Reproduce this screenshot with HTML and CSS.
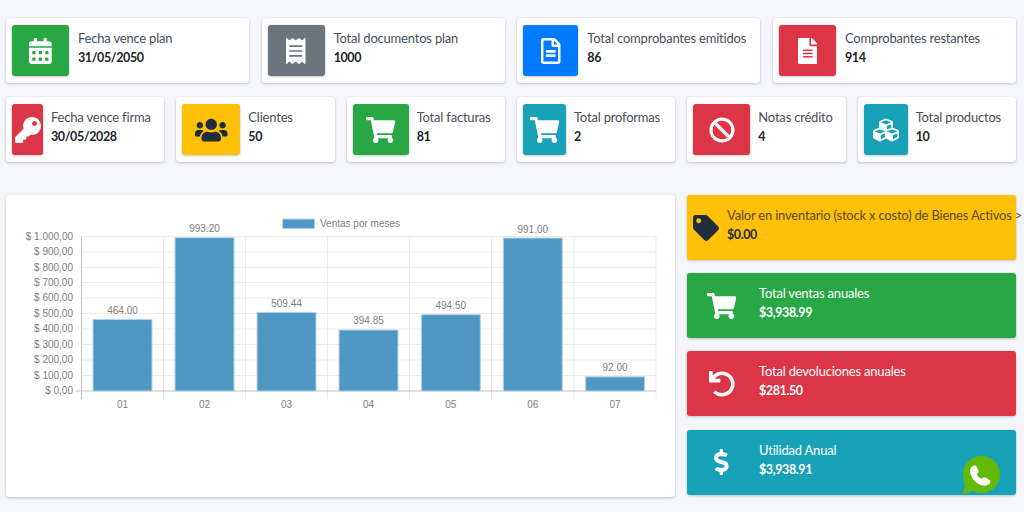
FILE: index.html
```html
<!DOCTYPE html>
<html lang="es">
<head>
  <meta charset="UTF-8">
  <title>Dashboard</title>
  <meta name="viewport" content="width=device-width, initial-scale=1.0">
  <link rel="stylesheet" href="styles.css">
</head>
<body>

<div class="row row-4">
  <div class="info-box">
    <div class="icon bg-green w57">
      <svg class="fa" viewBox="0 0 448 512"><path d="M0 464c0 26.5 21.5 48 48 48h352c26.5 0 48-21.5 48-48V192H0v272zm320-196c0-6.6 5.4-12 12-12h40c6.6 0 12 5.4 12 12v40c0 6.6-5.4 12-12 12h-40c-6.6 0-12-5.4-12-12v-40zm0 128c0-6.6 5.4-12 12-12h40c6.6 0 12 5.4 12 12v40c0 6.6-5.4 12-12 12h-40c-6.6 0-12-5.4-12-12v-40zM192 268c0-6.6 5.4-12 12-12h40c6.6 0 12 5.4 12 12v40c0 6.6-5.4 12-12 12h-40c-6.6 0-12-5.4-12-12v-40zm0 128c0-6.6 5.4-12 12-12h40c6.6 0 12 5.4 12 12v40c0 6.6-5.4 12-12 12h-40c-6.6 0-12-5.4-12-12v-40zM64 268c0-6.6 5.4-12 12-12h40c6.6 0 12 5.4 12 12v40c0 6.6-5.4 12-12 12H76c-6.6 0-12-5.4-12-12v-40zm0 128c0-6.6 5.4-12 12-12h40c6.6 0 12 5.4 12 12v40c0 6.6-5.4 12-12 12H76c-6.6 0-12-5.4-12-12v-40zM400 64h-48V16c0-8.8-7.2-16-16-16h-32c-8.8 0-16 7.2-16 16v48H160V16c0-8.8-7.2-16-16-16h-32c-8.8 0-16 7.2-16 16v48H48C21.5 64 0 85.5 0 112v48h448v-48c0-26.5-21.5-48-48-48z"/></svg>
    </div>
    <div class="text"><span class="label">Fecha vence plan</span><span class="value">31/05/2050</span></div>
  </div>
  <div class="info-box">
    <div class="icon bg-gray w57">
      <svg class="fa" viewBox="0 0 384 512"><path d="M358.4 3.2L320 48 265.6 3.2a15.9 15.9 0 0 0-19.2 0L192 48 137.6 3.2a15.9 15.9 0 0 0-19.2 0L64 48 25.6 3.2C15-4.7 0 2.8 0 16v480c0 13.2 15 20.7 25.6 12.8L64 464l54.4 44.8a15.9 15.9 0 0 0 19.2 0L192 464l54.4 44.8a15.9 15.9 0 0 0 19.2 0L320 464l38.4 44.8c10.5 7.9 25.6.4 25.6-12.8V16c0-13.2-15-20.7-25.6-12.8zM320 360c0 4.4-3.6 8-8 8H72c-4.4 0-8-3.6-8-8v-16c0-4.4 3.6-8 8-8h240c4.4 0 8 3.6 8 8v16zm0-96c0 4.4-3.6 8-8 8H72c-4.4 0-8-3.6-8-8v-16c0-4.4 3.6-8 8-8h240c4.4 0 8 3.6 8 8v16zm0-96c0 4.4-3.6 8-8 8H72c-4.4 0-8-3.6-8-8v-16c0-4.4 3.6-8 8-8h240c4.4 0 8 3.6 8 8v16z"/></svg>
    </div>
    <div class="text"><span class="label">Total documentos plan</span><span class="value">1000</span></div>
  </div>
  <div class="info-box">
    <div class="icon bg-blue w55">
      <svg class="fa" viewBox="0 0 384 512"><path d="M288 248v28c0 6.6-5.4 12-12 12H108c-6.6 0-12-5.4-12-12v-28c0-6.6 5.4-12 12-12h168c6.6 0 12 5.4 12 12zm-12 72H108c-6.6 0-12 5.4-12 12v28c0 6.6 5.4 12 12 12h168c6.6 0 12-5.4 12-12v-28c0-6.6-5.4-12-12-12zm108-188.1V464c0 26.5-21.5 48-48 48H48c-26.5 0-48-21.5-48-48V48C0 21.5 21.5 0 48 0h204.1C264.8 0 277 5.1 286 14.1L369.9 98c9 8.9 14.1 21.2 14.1 33.9zm-128-80V128h76.1L256 51.9zM336 464V176H232c-13.3 0-24-10.7-24-24V48H48v416h288z"/></svg>
    </div>
    <div class="text"><span class="label">Total comprobantes emitidos</span><span class="value">86</span></div>
  </div>
  <div class="info-box">
    <div class="icon bg-red w57">
      <svg class="fa" viewBox="0 0 384 512"><path d="M224 136V0H24C10.7 0 0 10.7 0 24v464c0 13.3 10.7 24 24 24h336c13.3 0 24-10.7 24-24V160H248c-13.2 0-24-10.8-24-24zm64 236c0 6.6-5.4 12-12 12H108c-6.6 0-12-5.4-12-12v-8c0-6.6 5.4-12 12-12h168c6.6 0 12 5.4 12 12v8zm0-64c0 6.6-5.4 12-12 12H108c-6.6 0-12-5.4-12-12v-8c0-6.6 5.4-12 12-12h168c6.6 0 12 5.4 12 12v8zm0-72v8c0 6.6-5.4 12-12 12H108c-6.6 0-12-5.4-12-12v-8c0-6.6 5.4-12 12-12h168c6.6 0 12 5.4 12 12zm96-114.1v6.1H256V0h6.1c6.4 0 12.5 2.5 17 7l97.9 98c4.5 4.5 7 10.6 7 16.9z"/></svg>
    </div>
    <div class="text"><span class="label">Comprobantes restantes</span><span class="value">914</span></div>
  </div>
</div>

<div class="row row-6">
  <div class="info-box">
    <div class="icon bg-red w31">
      <svg class="fa" viewBox="0 0 512 512"><path d="M512 176.001C512 273.203 433.202 352 336 352c-11.22 0-22.19-1.062-32.827-3.069l-24.012 27.014A23.999 23.999 0 0 1 261.223 384H224v40c0 13.255-10.745 24-24 24h-40v40c0 13.255-10.745 24-24 24H24c-13.255 0-24-10.745-24-24v-78.059c0-6.365 2.529-12.47 7.029-16.971l161.802-161.802C163.108 213.814 160 195.271 160 176 160 78.798 238.797.001 335.999 0 433.488-.001 512 78.511 512 176.001zM336 128c0 26.51 21.49 48 48 48s48-21.49 48-48-21.49-48-48-48-48 21.49-48 48z"/></svg>
    </div>
    <div class="text"><span class="label">Fecha vence firma</span><span class="value">30/05/2028</span></div>
  </div>
  <div class="info-box">
    <div class="icon bg-yellow w58">
      <svg class="fa" viewBox="0 0 640 512"><path d="M96 224c35.3 0 64-28.7 64-64s-28.7-64-64-64-64 28.7-64 64 28.7 64 64 64zm448 0c35.3 0 64-28.7 64-64s-28.7-64-64-64-64 28.7-64 64 28.7 64 64 64zm32 32h-64c-17.6 0-33.5 7.1-45.1 18.6 40.3 22.1 68.9 62 75.1 109.4h66c17.7 0 32-14.3 32-32v-32c0-35.3-28.7-64-64-64zm-256 0c61.9 0 112-50.1 112-112S381.9 32 320 32 208 82.1 208 144s50.1 112 112 112zm76.8 32h-8.3c-20.8 10-43.9 16-68.5 16s-47.6-6-68.5-16h-8.3C179.6 288 128 339.6 128 403.2V432c0 26.5 21.5 48 48 48h288c26.5 0 48-21.5 48-48v-28.8c0-63.6-51.6-115.2-115.2-115.2zm-223.7-13.4C161.5 263.1 145.6 256 128 256H64c-35.3 0-64 28.7-64 64v32c0 17.7 14.3 32 32 32h65.9c6.3-47.4 34.9-87.3 75.2-109.4z"/></svg>
    </div>
    <div class="text"><span class="label">Clientes</span><span class="value">50</span></div>
  </div>
  <div class="info-box">
    <div class="icon bg-green w56">
      <svg class="fa" viewBox="0 0 576 512"><path d="M528.12 301.319l47.273-208C578.806 78.301 567.391 64 551.99 64H159.208l-9.166-44.81C147.758 8.021 137.93 0 126.529 0H24C10.745 0 0 10.745 0 24v16c0 13.255 10.745 24 24 24h69.883l70.248 343.435C147.325 417.1 136 435.222 136 456c0 30.928 25.072 56 56 56s56-25.072 56-56c0-15.674-6.447-29.835-16.824-40h209.647C430.447 426.165 424 440.326 424 456c0 30.928 25.072 56 56 56s56-25.072 56-56c0-22.172-12.888-41.332-31.579-50.405l5.517-24.276c3.413-15.018-8.002-29.319-23.403-29.319H218.117l-6.545-32h293.145c11.206 0 20.92-7.754 23.403-18.681z"/></svg>
    </div>
    <div class="text"><span class="label">Total facturas</span><span class="value">81</span></div>
  </div>
  <div class="info-box">
    <div class="icon bg-teal w43">
      <svg class="fa" viewBox="0 0 576 512"><path d="M528.12 301.319l47.273-208C578.806 78.301 567.391 64 551.99 64H159.208l-9.166-44.81C147.758 8.021 137.93 0 126.529 0H24C10.745 0 0 10.745 0 24v16c0 13.255 10.745 24 24 24h69.883l70.248 343.435C147.325 417.1 136 435.222 136 456c0 30.928 25.072 56 56 56s56-25.072 56-56c0-15.674-6.447-29.835-16.824-40h209.647C430.447 426.165 424 440.326 424 456c0 30.928 25.072 56 56 56s56-25.072 56-56c0-22.172-12.888-41.332-31.579-50.405l5.517-24.276c3.413-15.018-8.002-29.319-23.403-29.319H218.117l-6.545-32h293.145c11.206 0 20.92-7.754 23.403-18.681z"/></svg>
    </div>
    <div class="text"><span class="label">Total proformas</span><span class="value">2</span></div>
  </div>
  <div class="info-box">
    <div class="icon bg-red w57">
      <svg class="fa" viewBox="0 0 512 512"><path d="M256 8C119.034 8 8 119.033 8 256s111.034 248 248 248 248-111.034 248-248S392.967 8 256 8zm130.108 117.892c65.448 65.448 70 165.481 20.677 235.637L150.47 105.216c70.204-49.356 170.226-44.735 235.638 20.676zM125.892 386.108c-65.448-65.448-70-165.481-20.677-235.637L361.53 406.784c-70.203 49.356-170.226 44.736-235.638-20.676z"/></svg>
    </div>
    <div class="text"><span class="label">Notas crédito</span><span class="value">4</span></div>
  </div>
  <div class="info-box">
    <div class="icon bg-teal w44">
      <svg class="fa" viewBox="0 0 512 512"><path d="M488.6 250.2L392 214V105.5c0-15-9.3-28.4-23.4-33.7l-100-37.5c-8.1-3.1-17.1-3.1-25.3 0l-100 37.5c-14.1 5.3-23.4 18.7-23.4 33.7V214l-96.6 36.2C9.3 255.5 0 268.9 0 283.9V394c0 13.6 7.7 26.1 19.9 32.2l100 50c10.1 5.1 22.1 5.1 32.2 0l103.9-52 103.9 52c10.1 5.1 22.1 5.1 32.2 0l100-50c12.2-6.1 19.9-18.6 19.9-32.2V283.9c0-15-9.3-28.4-23.4-33.7zM358 214.8l-85 31.9v-68.2l85-37v73.3zM154 104.1l102-38.2 102 38.2v.6l-102 41.4-102-41.4v-.6zm84 291.1l-85 42.5v-79.1l85-38.8v75.4zm0-112l-102 41.4-102-41.4v-.6l102-38.2 102 38.2v.6zm240 112l-85 42.5v-79.1l85-38.8v75.4zm0-112l-102 41.4-102-41.4v-.6l102-38.2 102 38.2v.6z"/></svg>
    </div>
    <div class="text"><span class="label">Total productos</span><span class="value">10</span></div>
  </div>
</div>

<div class="main">
  <div class="chart-card">
    <svg class="chart" viewBox="0 0 669 302" width="669" height="302">
      <g class="grid">
        <path d="M75 41.500H650M75 57H650M75 72.500H650M75 87.500H650M75 103H650M75 118.500H650M75 134H650M75 149.500H650M75 165H650M75 180.500H650"/>
        <path d="M157.500 41.500V204M239.500 41.500V204M321.500 41.500V204M403.500 41.500V204M485.500 41.500V204M568 41.500V204M650 41.500V204"/>
      </g>
      <g class="axis">
        <path d="M75.500 41.500V204M70 196H650"/>
      </g>
      <g class="bars">
        <rect x="87" y="124.400" width="59" height="71.600"/>
        <rect x="169" y="42.700" width="59" height="153.300"/>
        <rect x="251" y="117.400" width="59" height="78.600"/>
        <rect x="333" y="135" width="59" height="61"/>
        <rect x="415.300" y="119.700" width="59" height="76.300"/>
        <rect x="497.300" y="43" width="59" height="153"/>
        <rect x="579.600" y="181.800" width="59" height="14.200"/>
      </g>
      <rect class="swatch" x="276.500" y="24" width="32" height="9.500"/>
      <text class="legend" x="314" y="32">Ventas por meses</text>
      <g class="ylabels">
        <text x="67" y="44.500">$ 1.000,00</text>
        <text x="67" y="60">$ 900,00</text>
        <text x="67" y="75.500">$ 800,00</text>
        <text x="67" y="90.500">$ 700,00</text>
        <text x="67" y="106">$ 600,00</text>
        <text x="67" y="121.500">$ 500,00</text>
        <text x="67" y="137">$ 400,00</text>
        <text x="67" y="152.500">$ 300,00</text>
        <text x="67" y="168">$ 200,00</text>
        <text x="67" y="183.500">$ 100,00</text>
        <text x="67" y="199">$ 0,00</text>
      </g>
      <g class="xlabels">
        <text x="116.500" y="213">01</text>
        <text x="198.500" y="213">02</text>
        <text x="280.500" y="213">03</text>
        <text x="362.500" y="213">04</text>
        <text x="444.800" y="213">05</text>
        <text x="526.800" y="213">06</text>
        <text x="609" y="213">07</text>
      </g>
      <g class="xlabels">
        <text x="116.500" y="118.500">464.00</text>
        <text x="198.500" y="37">993.20</text>
        <text x="280.500" y="112">509.44</text>
        <text x="362.500" y="129">394.85</text>
        <text x="444.800" y="114">494.50</text>
        <text x="526.800" y="37.500">991.00</text>
        <text x="609" y="176">92.00</text>
      </g>
    </svg>
  </div>

  <div class="side">
    <div class="stat bg-yellow">
      <div class="icon w25">
        <svg class="fa" viewBox="0 0 512 512"><path d="M0 252.118V48C0 21.49 21.49 0 48 0h204.118a48 48 0 0 1 33.941 14.059l211.882 211.882c18.745 18.745 18.745 49.137 0 67.882L293.823 497.941c-18.745 18.745-49.137 18.745-67.882 0L14.059 286.059A48 48 0 0 1 0 252.118zM112 64c-26.51 0-48 21.49-48 48s21.49 48 48 48 48-21.49 48-48-21.49-48-48-48z"/></svg>
      </div>
      <div class="text"><span class="label">Valor en inventario (stock x costo) de Bienes Activos &gt; 0</span><span class="value">$0.00</span></div>
    </div>
    <div class="stat bg-green">
      <div class="icon w57">
        <svg class="fa" viewBox="0 0 576 512"><path d="M528.12 301.319l47.273-208C578.806 78.301 567.391 64 551.99 64H159.208l-9.166-44.81C147.758 8.021 137.93 0 126.529 0H24C10.745 0 0 10.745 0 24v16c0 13.255 10.745 24 24 24h69.883l70.248 343.435C147.325 417.1 136 435.222 136 456c0 30.928 25.072 56 56 56s56-25.072 56-56c0-15.674-6.447-29.835-16.824-40h209.647C430.447 426.165 424 440.326 424 456c0 30.928 25.072 56 56 56s56-25.072 56-56c0-22.172-12.888-41.332-31.579-50.405l5.517-24.276c3.413-15.018-8.002-29.319-23.403-29.319H218.117l-6.545-32h293.145c11.206 0 20.92-7.754 23.403-18.681z"/></svg>
      </div>
      <div class="text"><span class="label">Total ventas anuales</span><span class="value">$3,938.99</span></div>
    </div>
    <div class="stat bg-red">
      <div class="icon w57">
        <svg class="fa" viewBox="0 0 512 512"><path d="M212.333 224.333H12c-6.627 0-12-5.373-12-12V12C0 5.373 5.373 0 12 0h48c6.627 0 12 5.373 12 12v78.112C117.773 39.279 184.26 7.47 258.175 8.007c136.906.994 246.448 111.623 246.157 248.532C504.041 393.258 393.12 504 256.333 504c-64.089 0-122.496-24.313-166.51-64.215-5.099-4.622-5.334-12.554-.467-17.42l33.967-33.967c4.474-4.474 11.662-4.717 16.401-.525C170.76 415.336 211.58 432 256.333 432c97.268 0 176-78.716 176-176 0-97.267-78.716-176-176-176-58.496 0-110.28 28.476-142.274 72.333h98.274c6.627 0 12 5.373 12 12v48c0 6.627-5.373 12-12 12z"/></svg>
      </div>
      <div class="text"><span class="label">Total devoluciones anuales</span><span class="value">$281.50</span></div>
    </div>
    <div class="stat bg-teal">
      <div class="icon w57">
        <svg class="fa" viewBox="0 0 288 512"><path d="M209.2 233.4l-108-31.6C88.7 198.2 80 186.5 80 173.5c0-16.3 13.2-29.5 29.5-29.5h66.3c12.2 0 24.2 3.7 34.2 10.5 6.1 4.1 14.3 3.1 19.5-2l34.8-34c7.1-6.9 6.1-18.4-1.8-24.5C238 74.8 207.4 64.1 176 64V16c0-8.8-7.2-16-16-16h-32c-8.8 0-16 7.2-16 16v48h-2.5C45.8 64-5.4 118.7.5 183.6c4.2 46.1 39.4 83.6 83.8 96.6l102.5 30c12.5 3.7 21.2 15.3 21.2 28.3 0 16.3-13.2 29.5-29.5 29.5h-66.3C100 368 88 364.3 78 357.5c-6.1-4.1-14.3-3.1-19.5 2l-34.8 34c-7.1 6.9-6.1 18.4 1.8 24.5 24.5 19.2 55.1 29.9 86.5 30v48c0 8.8 7.2 16 16 16h32c8.8 0 16-7.2 16-16v-48.2c46.6-.9 90.3-28.6 105.7-72.7 21.5-61.6-14.6-124.8-72.5-141.7z"/></svg>
      </div>
      <div class="text"><span class="label">Utilidad Anual</span><span class="value">$3,938.91</span></div>
    </div>
  </div>
</div>

<svg class="whatsapp" viewBox="0 0 40 40" width="40" height="40">
  <path class="wa-bubble" d="M19.500 0C29.700 0 38 8.200 38 18.400S29.700 37 19.500 37c-3 0-5.800-.7-8.300-2L0 38.500l3.500-9.600C1.500 26 1 22.500 1 18.400 1 8.200 9.300 0 19.500 0z"/>
  <path class="wa-phone" d="M11 10c1.500-.8 3-.3 3.600.8l1.800 3.500c.5 1 .2 2-.5 2.600l-1.300 1.100c1.200 2.300 2.800 3.900 4.800 5l1.500-1.300c.8-.7 1.900-.7 2.700-.2l3.800 2.400c1.100.7 1.300 2 .6 3-1.200 1.700-3.300 3-5.800 2.800C15 29.200 8 22 8 14.500 8 12.700 9.300 10.900 11 10z"/>
</svg>

</body>
</html>
```

FILE: styles.css
```css
* { box-sizing: border-box; margin: 0; padding: 0; }
html, body {
  height: 512px;
  overflow: hidden;
}
body {
  position: relative;
  padding: 18px 8px 0 6px;
  background: #f4f6f9;
  color: #212529;
  font-family: 'Lato', sans-serif;
  font-size: 13px;
}
.row {
  display: grid;
  margin-bottom: 14px;
}
.row-4 {
  grid-template-columns: repeat(4, 1fr);
  column-gap: 12.67px;
}
.row-6 {
  grid-template-columns: repeat(6, 1fr);
  column-gap: 12px;
  margin-bottom: 33px;
}
.info-box, .stat {
  display: flex;
  height: 65px;
  padding: 7px 6px;
  border-radius: 3px;
  box-shadow: 0 0 1px rgba(0,0,0,.13), 0 1px 3px rgba(0,0,0,.2);
}
.info-box {
  background: #fff;
  min-width: 0;
}
.icon {
  flex: none;
  display: flex;
  align-items: center;
  justify-content: center;
  border-radius: 3px;
}
.info-box .icon {
  box-shadow: 0 0 1px rgba(0,0,0,.13), 0 1px 3px rgba(0,0,0,.2);
}
.w25 { width: 25px; }
.w31 { width: 31px; }
.w43 { width: 43px; }
.w44 { width: 44px; }
.w55 { width: 55px; }
.w56 { width: 56px; }
.w57 { width: 57px; }
.w58 { width: 58px; }
.fa {
  height: 26px;
  fill: #fff;
  flex: none;
}
.text {
  display: flex;
  flex-direction: column;
  padding: 4px 0 0 9px;
  white-space: nowrap;
}
.row-6 .text {
  padding-left: 8px;
}
.label {
  line-height: 19px;
  letter-spacing: -.2px;
  color: #495057;
}
.value {
  line-height: 19px;
  font-size: 12.5px;
  letter-spacing: -.4px;
  font-weight: 700;
}
.bg-green { background: #28a745; }
.bg-gray { background: #6c757d; }
.bg-blue { background: #007bff; }
.bg-red { background: #dc3545; }
.bg-yellow { background: #ffc107; }
.bg-teal { background: #17a2b8; }
.bg-yellow .fa { fill: #1f2d3d; }

.main {
  display: flex;
  gap: 12px;
}
.chart-card {
  flex: none;
  width: 669px;
  height: 302px;
  background: #fff;
  border-radius: 3px;
  box-shadow: 0 0 1px rgba(0,0,0,.13), 0 1px 3px rgba(0,0,0,.2);
}
.chart {
  display: block;
}
.grid path {
  fill: none;
  stroke: #ececec;
  stroke-width: 1;
}
.axis path {
  fill: none;
  stroke: #c4c4c4;
  stroke-width: 1;
}
.bars rect, .swatch {
  fill: rgba(60,141,188,.9);
  stroke: #b5d5e8;
  stroke-width: 1;
}
.chart text {
  font-family: 'Liberation Sans', Arial, sans-serif;
  font-size: 10px;
  fill: #808080;
}
.ylabels text { text-anchor: end; }
.xlabels text { text-anchor: middle; }

.side {
  flex: 1;
  min-width: 0;
  display: flex;
  flex-direction: column;
  gap: 13.2px;
}
.stat {
  color: #fff;
}
.stat .label { color: #fff; }
.stat.bg-yellow { color: #1f2d3d; }
.stat.bg-yellow .label { color: #5a4a1c; }

.whatsapp {
  position: absolute;
  left: 962px;
  top: 456px;
}
.wa-bubble { fill: #62ba04; }
.wa-phone { fill: #fff; }
```
